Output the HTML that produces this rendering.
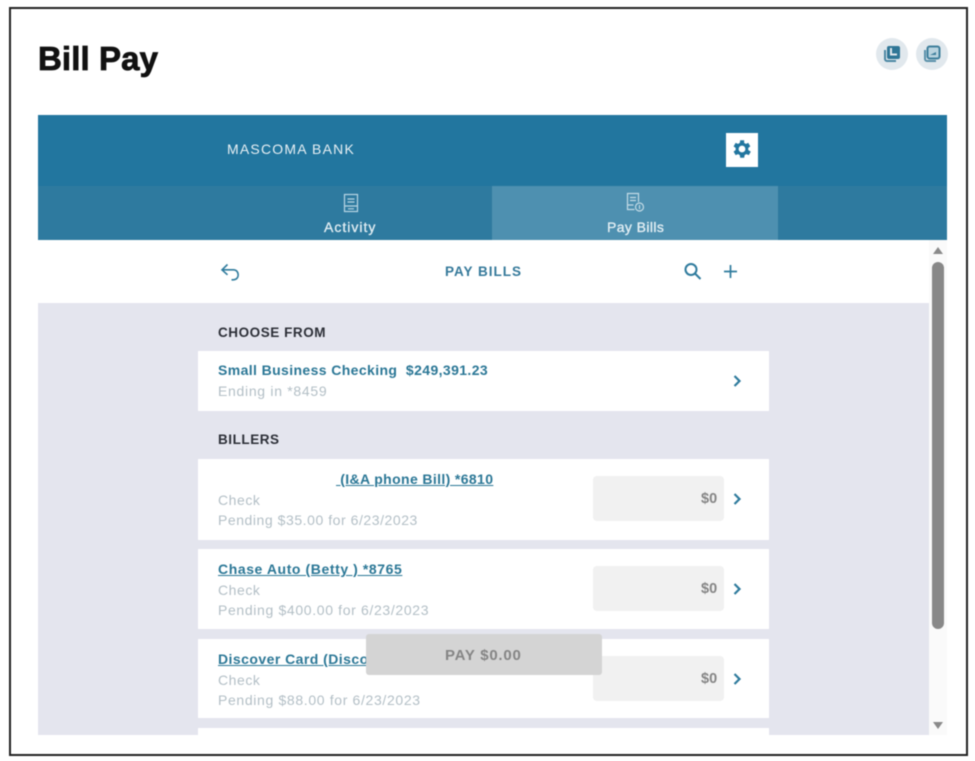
<!DOCTYPE html>
<html><head><meta charset="utf-8"><style>
html,body{margin:0;padding:0;background:#fff}
#p{position:relative;width:975px;height:761px;overflow:hidden;background:#fff;font-family:"Liberation Sans",sans-serif;filter:blur(.4px)}
#p div,#p svg,#p span.t{position:absolute}
.t{white-space:nowrap}
.b{background:#e4e5ee}
.c{background:#fff;left:198px;width:571px}
.inp{left:593px;width:131px;height:45px;background:#f1f1f1;border-radius:4px}
.name{left:218px;font-size:14px;font-weight:bold;color:#2b7796;letter-spacing:.58px;line-height:16px;text-decoration:underline}
.sub{left:218px;font-size:14px;color:#b3bfc6;letter-spacing:.55px;line-height:16px}
.amt{left:701px;font-size:14.5px;font-weight:bold;color:#858585;line-height:16px}
.h{left:218px;font-size:13.5px;font-weight:bold;color:#2c2f37;letter-spacing:.55px;line-height:16px}
</style></head><body><div id="p">
<div style="left:9px;top:7px;width:955px;height:745px;border:2px solid #222"></div>
<span class="t" style="left:38px;top:39px;font-size:33px;font-weight:bold;color:#111;line-height:40px;letter-spacing:.1px;-webkit-text-stroke:.8px #111">Bill Pay</span>

<div style="left:876px;top:38px;width:32px;height:32px;border-radius:50%;background:#e1e8ed"></div>
<div style="left:916px;top:38px;width:32px;height:32px;border-radius:50%;background:#e1e8ed"></div>
<svg style="left:876px;top:38px" width="32" height="32" viewBox="0 0 32 32"><path d="M9 12v9a2 2 0 0 0 2 2h9" fill="none" stroke="#4b87a3" stroke-width="2"/><rect x="11" y="8" width="13" height="13" rx="2" fill="#2f7696"/><path d="M15 10v6.500h6" fill="none" stroke="#e1e8ed" stroke-width="2"/></svg>
<svg style="left:916px;top:38px" width="32" height="32" viewBox="0 0 32 32"><path d="M9 12v9a2 2 0 0 0 2 2h9" fill="none" stroke="#5a90a9" stroke-width="2"/><rect x="11.500" y="8.500" width="12" height="12" rx="2" fill="#b9d3df" stroke="#3f7f9c" stroke-width="2"/><path d="M14 17h6v-3z" fill="#3f7f9c"/></svg>

<div style="left:38px;top:115px;width:909px;height:71px;background:#22769f"></div>
<div style="left:38px;top:186px;width:909px;height:54px;background:#2e7a9f"></div>
<div style="left:492px;top:186px;width:286px;height:54px;background:#4e90b0"></div>
<span class="t" style="left:227px;top:141px;font-size:14px;color:#e8f0f4;letter-spacing:1.2px;line-height:16px">MASCOMA BANK</span>
<div style="left:726px;top:133px;width:32px;height:34px;background:#fff"></div>
<svg style="left:730px;top:137px" width="24" height="24" viewBox="0 0 24 24"><path fill="#22769f" d="M19.400 13a7.600 7.600 0 0 0 0-2l2.100-1.600-2-3.500-2.500 1a7.500 7.500 0 0 0-1.700-1L15.400 3.200h-4l-.4 2.700a7.500 7.500 0 0 0-1.700 1l-2.500-1-2 3.500L6.900 11a7.600 7.600 0 0 0 0 2l-2.100 1.600 2 3.500 2.500-1a7.500 7.500 0 0 0 1.700 1l.4 2.700h4l.4-2.700a7.500 7.500 0 0 0 1.700-1l2.500 1 2-3.500zM13.200 15.400a3.400 3.400 0 1 1 0-6.800 3.400 3.400 0 0 1 0 6.800z" transform="translate(-1.200 0)"/></svg>

<svg style="left:343px;top:193px" width="16" height="20" viewBox="0 0 16 20" fill="none" stroke="#b9d6e4" stroke-width="1.200"><rect x="1.500" y="1.500" width="13" height="17"/><path d="M4.500 6h7M4.500 9h7M1.500 13h13M5 15.800h6"/></svg>
<span class="t" style="left:324px;top:219px;font-size:14px;color:#e4eff4;letter-spacing:1px;line-height:16px;-webkit-text-stroke:.3px #e4eff4">Activity</span>
<svg style="left:626px;top:192px" width="20" height="21" viewBox="0 0 20 21" fill="none" stroke="#c3dbe6" stroke-width="1.200"><path d="M12.500 10V1.500h-11v16h7"/><path d="M4 5.500h6M4 8.500h6M1.500 13h6"/><circle cx="13.500" cy="15" r="4"/><path d="M13.500 13v4"/></svg>
<span class="t" style="left:607px;top:219px;font-size:14px;color:#e4eff4;letter-spacing:.4px;line-height:16px;-webkit-text-stroke:.3px #e4eff4">Pay Bills</span>

<div style="left:929px;top:240px;width:18px;height:495px;background:#fafafa"></div>
<div style="left:932px;top:262px;width:12px;height:367px;border-radius:6px;background:#888"></div>
<svg style="left:932px;top:246px" width="12" height="9"><path d="M1 8L6 1l5 7z" fill="#8a8a8a"/></svg>
<svg style="left:932px;top:721px" width="12" height="9"><path d="M1 1h10L6 8z" fill="#8a8a8a"/></svg>

<svg style="left:220px;top:262px" width="22" height="20" viewBox="0 0 22 20" fill="none" stroke="#2f7b9d" stroke-width="1.600"><path d="M7.500 2.500L2 7.800l5.500 5"/><path d="M2.500 7.800h11c6 0 6.500 9.700 0 10h-2"/></svg>
<span class="t" style="left:445px;top:264px;font-size:13.500px;font-weight:bold;color:#35799a;letter-spacing:1px;line-height:16px">PAY BILLS</span>
<svg style="left:682px;top:261px" width="22" height="22" viewBox="0 0 22 22" fill="none" stroke="#2f7b9d" stroke-width="2"><circle cx="9" cy="8.500" r="5.500"/><path d="M13 12.500l5.500 5.500"/></svg>
<svg style="left:722px;top:263px" width="17" height="17" viewBox="0 0 17 17" fill="none" stroke="#2f7b9d" stroke-width="1.700"><path d="M8.500 2v13M2 8.500h13"/></svg>

<div class="b" style="left:38px;top:303px;width:891px;height:432px"></div>
<span class="t h" style="top:325px">CHOOSE FROM</span>
<div class="c" style="top:351px;height:60px"></div>
<span class="t" style="left:218px;top:362px;font-size:14px;font-weight:bold;color:#2b7796;letter-spacing:.39px;line-height:16px;white-space:pre">Small Business Checking  $249,391.23</span>
<span class="t sub" style="top:383px;letter-spacing:.7px">Ending in *8459</span>
<svg style="left:732px;top:374px" width="12" height="14" fill="none" stroke="#2f7b9d" stroke-width="2.200"><path d="M2.500 2L7.500 7l-5 5"/></svg>

<span class="t h" style="top:432px">BILLERS</span>

<div class="c" style="top:459px;height:81px"></div>
<span class="t name" style="left:336px;top:471px;letter-spacing:.37px">&nbsp;(I&amp;A phone Bill) *6810</span>
<span class="t sub" style="top:492px">Check</span>
<span class="t sub" style="top:512px">Pending $35.00 for 6/23/2023</span>
<div class="inp" style="top:476px"></div>
<span class="t amt" style="top:491px">$0</span>
<svg style="left:732px;top:492px" width="12" height="14" fill="none" stroke="#2f7b9d" stroke-width="2.200"><path d="M2.500 2L7.500 7l-5 5"/></svg>

<div class="c" style="top:549px;height:80px"></div>
<span class="t name" style="top:561px">Chase Auto (Betty ) *8765</span>
<span class="t sub" style="top:582px">Check</span>
<span class="t sub" style="top:602px;letter-spacing:.65px">Pending $400.00 for 6/23/2023</span>
<div class="inp" style="top:566px"></div>
<span class="t amt" style="top:581px">$0</span>
<svg style="left:732px;top:582px" width="12" height="14" fill="none" stroke="#2f7b9d" stroke-width="2.200"><path d="M2.500 2L7.500 7l-5 5"/></svg>

<div class="c" style="top:639px;height:79px"></div>
<span class="t name" style="top:651px;letter-spacing:.45px">Discover Card (Disco</span>
<span class="t sub" style="top:672px">Check</span>
<span class="t sub" style="top:692px;letter-spacing:.65px">Pending $88.00 for 6/23/2023</span>
<div class="inp" style="top:656px"></div>
<span class="t amt" style="top:671px">$0</span>
<svg style="left:732px;top:672px" width="12" height="14" fill="none" stroke="#2f7b9d" stroke-width="2.200"><path d="M2.500 2L7.500 7l-5 5"/></svg>

<div class="c" style="top:728px;height:7px"></div>

<div style="left:366px;top:634px;width:236px;height:41px;background:#d4d4d4;border-radius:3px"></div>
<span class="t" style="left:445px;top:648px;font-size:15px;font-weight:bold;color:#858585;letter-spacing:.75px;line-height:16px">PAY $0.00</span>
</div></body></html>
